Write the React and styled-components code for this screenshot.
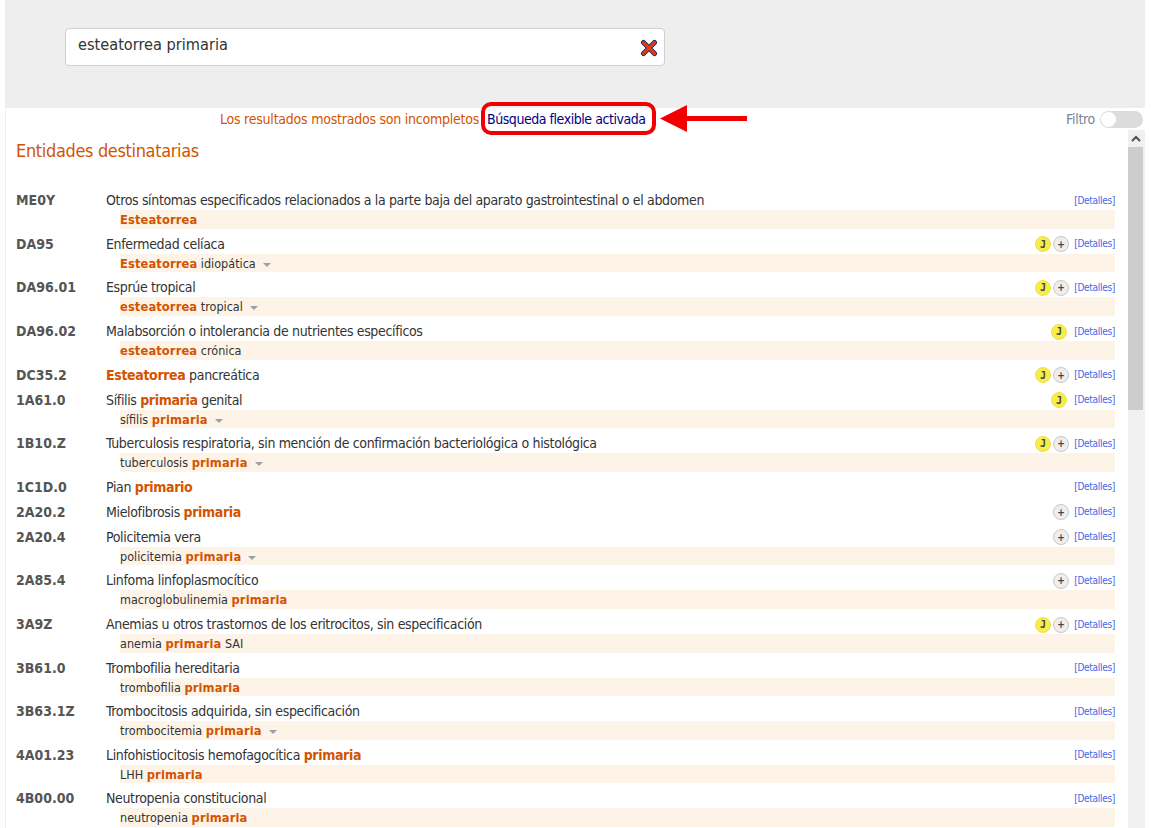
import React from "react";
import styled, { createGlobalStyle } from "styled-components";

const ORANGE = "#d35400";

const GlobalStyle = createGlobalStyle`
  html, body {
    margin: 0;
    height: 828px;
    overflow: hidden;
    background: #fff;
  }
  body {
    font-family: "DejaVu Sans Condensed", "DejaVu Sans", sans-serif;
    font-size: 14px;
    color: #333;
  }
`;

const ENTITIES = [
  { code: "ME0Y", title: ["Otros síntomas especificados relacionados a la parte baja del aparato gastrointestinal o el abdomen"], sub: ["*Esteatorrea"] },
  { code: "DA95", title: ["Enfermedad celíaca"], sub: ["*Esteatorrea", " idiopática"], caret: true, j: true, plus: true },
  { code: "DA96.01", title: ["Esprúe tropical"], sub: ["*esteatorrea", " tropical"], caret: true, j: true, plus: true },
  { code: "DA96.02", title: ["Malabsorción o intolerancia de nutrientes específicos"], sub: ["*esteatorrea", " crónica"], j: true },
  { code: "DC35.2", title: ["*Esteatorrea", " pancreática"], j: true, plus: true },
  { code: "1A61.0", title: ["Sífilis ", "*primaria", " genital"], sub: ["sífilis ", "*primaria"], caret: true, j: true },
  { code: "1B10.Z", title: ["Tuberculosis respiratoria, sin mención de confirmación bacteriológica o histológica"], sub: ["tuberculosis ", "*primaria"], caret: true, j: true, plus: true },
  { code: "1C1D.0", title: ["Pian ", "*primario"] },
  { code: "2A20.2", title: ["Mielofibrosis ", "*primaria"], plus: true },
  { code: "2A20.4", title: ["Policitemia vera"], sub: ["policitemia ", "*primaria"], caret: true, plus: true },
  { code: "2A85.4", title: ["Linfoma linfoplasmocítico"], sub: ["macroglobulinemia ", "*primaria"], plus: true },
  { code: "3A9Z", title: ["Anemias u otros trastornos de los eritrocitos, sin especificación"], sub: ["anemia ", "*primaria", " SAI"], j: true, plus: true },
  { code: "3B61.0", title: ["Trombofilia hereditaria"], sub: ["trombofilia ", "*primaria"] },
  { code: "3B63.1Z", title: ["Trombocitosis adquirida, sin especificación"], sub: ["trombocitemia ", "*primaria"], caret: true },
  { code: "4A01.23", title: ["Linfohistiocitosis hemofagocítica ", "*primaria"], sub: ["LHH ", "*primaria"] },
  { code: "4B00.00", title: ["Neutropenia constitucional"], sub: ["neutropenia ", "*primaria"] },
];

// parts starting with * are the matched search words
const renderParts = (parts) =>
  parts.map((part, i) =>
    part.startsWith("*") ? <Match key={i}>{part.slice(1)}</Match> : <span key={i}>{part}</span>
  );

const App = () => (
  <Page>
    <GlobalStyle />
    <SearchPanel>
      <SearchBox>
        <SearchText>esteatorrea primaria</SearchText>
        <ClearIcon width="18" height="18" viewBox="0 0 18 18">
          <path d="M3.5 3.5 L14.5 14.5 M14.5 3.5 L3.5 14.5" stroke="#1c2f6b" strokeWidth="5" strokeLinecap="round" />
          <path d="M3.5 3.5 L14.5 14.5 M14.5 3.5 L3.5 14.5" stroke="#ee3a12" strokeWidth="3" strokeLinecap="round" />
        </ClearIcon>
      </SearchBox>
    </SearchPanel>

    <Results>
      <Notice>
        <Incomplete>Los resultados mostrados son incompletos</Incomplete>
        <FlexibleLink>Búsqueda flexible activada</FlexibleLink>
        <Highlight />
        <Arrow width="87" height="27" viewBox="0 0 87 27">
          <path d="M0 13.5 L27 0 L27 11 L87 11 L87 16 L27 16 L27 27 Z" fill="#f00000" />
        </Arrow>
        <FilterBox>
          <FilterLabel>Filtro</FilterLabel>
          <Switch>
            <Knob />
          </Switch>
        </FilterBox>
      </Notice>

      <Body>
        <ListArea>
          <Heading>Entidades destinatarias</Heading>
          <List>
            {ENTITIES.map((item) => (
              <Entity key={item.code}>
                <TitleRow>
                  <Code>{item.code}</Code>
                  <Title>{renderParts(item.title)}</Title>
                  <Badges>
                    {item.j && <JBadge>J</JBadge>}
                    {item.plus && <PlusBadge>+</PlusBadge>}
                    <Details>[Detalles]</Details>
                  </Badges>
                </TitleRow>
                {item.sub && (
                  <SubRow>
                    {renderParts(item.sub)}
                    {item.caret && <Caret />}
                  </SubRow>
                )}
              </Entity>
            ))}
          </List>
        </ListArea>
        <Scrollbar>
          <ScrollUp>
            <svg width="10" height="7" viewBox="0 0 10 7">
              <path d="M1 6 L5 2 L9 6" fill="none" stroke="#505050" strokeWidth="2" />
            </svg>
          </ScrollUp>
          <ScrollThumb />
        </Scrollbar>
      </Body>
    </Results>
  </Page>
);

const Page = styled.div`
  width: 1145px;
  height: 828px;
  padding-left: 5px;
  box-sizing: border-box;
  overflow: hidden;
`;

const SearchPanel = styled.div`
  height: 108px;
  padding: 28px 0 0 60px;
  box-sizing: border-box;
  background: #eeeeee;
`;

const SearchBox = styled.div`
  width: 600px;
  height: 38px;
  box-sizing: border-box;
  display: flex;
  align-items: center;
  justify-content: space-between;
  padding: 0 6px 0 12px;
  background: #fff;
  border: 1px solid #cfcfcf;
  border-radius: 4px;
`;

const SearchText = styled.span`
  font-size: 16.2px;
  margin-top: -6px;
  color: #333;
`;

const ClearIcon = styled.svg`
  margin-top: 1px;
`;

const Results = styled.div`
  border-left: 1px solid #f0f0f0;
  height: 720px;
`;

const Notice = styled.div`
  position: relative;
  height: 22px;
  display: flex;
  align-items: center;
  padding: 0 2px 0 214px;
`;

const Incomplete = styled.span`
  color: ${ORANGE};
  width: 267px;
  letter-spacing: -0.23px;
  white-space: nowrap;
`;

const FlexibleLink = styled.span`
  color: #000080;
  letter-spacing: -0.45px;
  white-space: nowrap;
`;

const Highlight = styled.div`
  position: absolute;
  left: 475px;
  top: -6px;
  width: 175px;
  height: 33px;
  box-sizing: border-box;
  border: 4px solid #f00000;
  border-radius: 10px;
`;

const Arrow = styled.svg`
  position: absolute;
  left: 654px;
  top: -3px;
`;

const FilterBox = styled.div`
  margin-left: auto;
  display: flex;
  align-items: center;
  gap: 5px;
`;

const FilterLabel = styled.span`
  color: #7a8599;
  letter-spacing: -0.3px;
`;

const Switch = styled.div`
  width: 43px;
  height: 17px;
  border-radius: 9px;
  background: #dcdcdc;
  display: flex;
  align-items: center;
  padding-left: 1px;
  box-sizing: border-box;
`;

const Knob = styled.div`
  width: 15px;
  height: 15px;
  border-radius: 50%;
  background: #fff;
`;

const Body = styled.div`
  display: flex;
  height: 698px;
`;

const ListArea = styled.div`
  flex: 1;
  min-width: 0;
  padding: 0 13px 0 10px;
`;

const Heading = styled.h2`
  margin: 0;
  height: 42px;
  line-height: 42px;
  font-size: 18px;
  font-weight: normal;
  letter-spacing: -0.35px;
  color: ${ORANGE};
`;

const List = styled.div`
  padding-top: 18.3px;
`;

const Entity = styled.div`
  display: flex;
  flex-direction: column;
  padding-bottom: 5px;
`;

const TitleRow = styled.div`
  display: flex;
  align-items: center;
  height: 20px;
`;

const Code = styled.span`
  width: 90px;
  flex: none;
  font-weight: bold;
  font-size: 14px;
  color: #555;
`;

const Title = styled.span`
  flex: 1;
  white-space: nowrap;
  letter-spacing: -0.35px;
`;

const Match = styled.span`
  font-weight: bold;
  color: ${ORANGE};
`;

const Badges = styled.span`
  display: flex;
  align-items: center;
`;

const Badge = styled.span`
  width: 16px;
  height: 16px;
  margin-top: 1px;
  box-sizing: border-box;
  border-radius: 50%;
  display: flex;
  align-items: center;
  justify-content: center;
  font-size: 10px;
  font-weight: bold;
  color: #444;
`;

const JBadge = styled(Badge)`
  background: #f7ec4a;
  border: 1px solid #efe24a;
  margin-right: 2px;
  font-family: "DejaVu Sans Mono", monospace;
`;

const PlusBadge = styled(Badge)`
  background: #eeeeee;
  border: 1px solid #c8c8c8;
`;

const Details = styled.span`
  width: 41px;
  margin-left: 5px;
  font-size: 10px;
  letter-spacing: -0.3px;
  color: #4466e6;
  text-align: right;
  white-space: nowrap;
`;

const SubRow = styled.div`
  margin-left: 104px;
  height: 18.6px;
  line-height: 19px;
  font-size: 12.5px;
  background: #fdf3e7;
  white-space: nowrap;

  ${Match} {
    font-size: 12.8px;
    letter-spacing: 0.1px;
  }
`;

const Caret = styled.span`
  display: inline-block;
  margin-left: 7px;
  vertical-align: 1px;
  border-left: 4px solid transparent;
  border-right: 4px solid transparent;
  border-top: 4px solid #9a9fac;
`;

const Scrollbar = styled.div`
  width: 17px;
  flex: none;
  background: #f0f0f0;
  display: flex;
  flex-direction: column;
`;

const ScrollUp = styled.div`
  height: 17px;
  padding-right: 2px;
  display: flex;
  align-items: center;
  justify-content: center;
`;

const ScrollThumb = styled.div`
  height: 263px;
  background: #cdcdcd;
  margin-right: 2px;
`;

export default App;
